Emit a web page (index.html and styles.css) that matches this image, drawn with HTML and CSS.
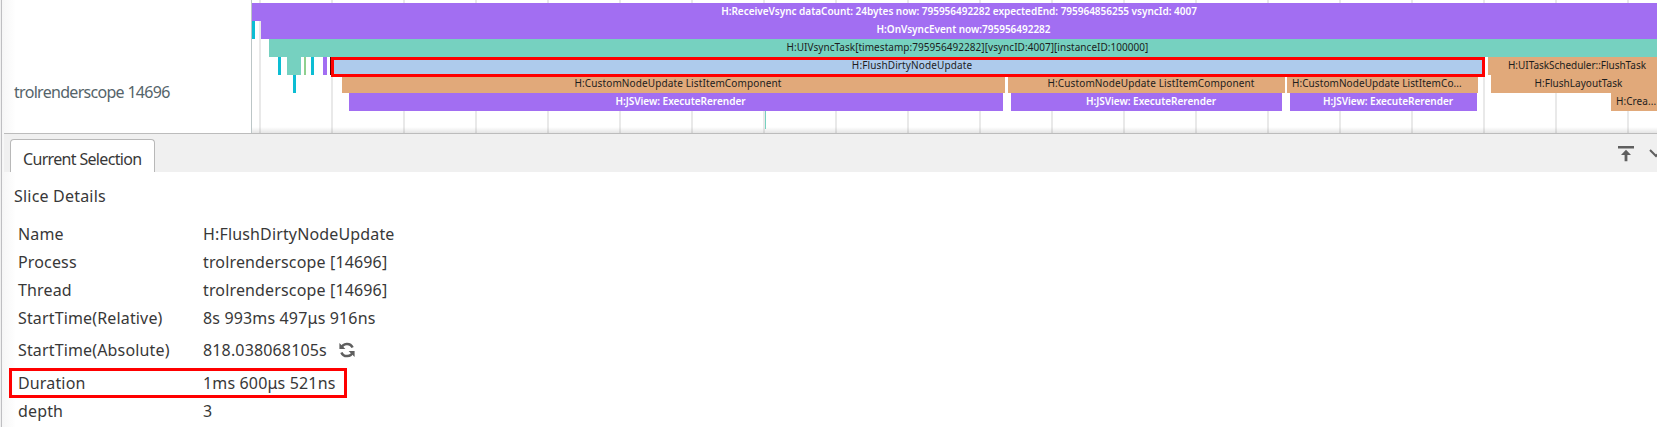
FILE: index.html
```
<!DOCTYPE html>
<html lang="en">
<head>
<meta charset="utf-8">
<title>Trace viewer</title>
<link rel="stylesheet" href="styles.css">
</head>
<body>
<div class="app">
  <section class="track">
    <div class="track-name">trolrenderscope 14696</div>
    <div class="chart">
      <div class="row">
        <div class="slice purple grow"><span class="b">H:ReceiveVsync dataCount: 24bytes now: 795956492282 expectedEnd: 795964856255 vsyncId: 4007</span></div>
      </div>
      <div class="row">
        <div class="slice cyan" style="width:3px"></div>
        <div class="slice purple grow" style="margin-left:6px"><span class="b">H:OnVsyncEvent now:795956492282</span></div>
      </div>
      <div class="row">
        <div class="slice teal grow" style="margin-left:17px"><span class="n snug">H:UIVsyncTask[timestamp:795956492282][vsyncID:4007][instanceID:100000]</span></div>
      </div>
      <div class="row">
        <div class="slice cyan" style="margin-left:26px;width:3px"></div>
        <div class="slice teal" style="margin-left:6px;width:14px"></div>
        <div class="slice green" style="margin-left:3px;width:2px"></div>
        <div class="slice cyan" style="margin-left:5px;width:3px"></div>
        <div class="slice purple" style="margin-left:9px;width:4px"></div>
        <div class="slice blue selected" style="margin-left:3px;width:1155px"><span class="n">H:FlushDirtyNodeUpdate</span></div>
        <div class="slice orange grow" style="margin-left:3px"><span class="n tight">H:UITaskScheduler::FlushTask</span></div>
      </div>
      <div class="row">
        <div class="slice cyan" style="margin-left:41px;width:3px"></div>
        <div class="slice orange" style="margin-left:46px;width:663px"><span class="n">H:CustomNodeUpdate ListItemComponent</span></div>
        <div class="slice orange" style="margin-left:3px;width:277px"><span class="n">H:CustomNodeUpdate ListItemComponent</span></div>
        <div class="slice orange cut" style="margin-left:2px;width:191px"><span class="n">H:CustomNodeUpdate ListItemCo...</span></div>
        <div class="slice orange grow" style="margin-left:13px"><span class="n snug">H:FlushLayoutTask</span></div>
      </div>
      <div class="row">
        <div class="slice purple" style="margin-left:97px;width:654px"><span class="b">H:JSView: ExecuteRerender</span></div>
        <div class="slice purple" style="margin-left:8px;width:271px"><span class="b">H:JSView: ExecuteRerender</span></div>
        <div class="slice purple" style="margin-left:8px;width:187px"><span class="b">H:JSView: ExecuteRerender</span></div>
        <div class="slice orange grow cut" style="margin-left:134px"><span class="n">H:Crea...</span></div>
      </div>
      <div class="row">
        <div class="slice teal" style="margin-left:513px;width:1px"></div>
      </div>
    </div>
  </section>
  <section class="panel">
    <header class="tabs">
      <div class="tab">Current Selection</div>
      <div class="tools">
        <svg width="16" height="16" viewBox="0 0 16 16"><path d="M0 0h16v2.6H0zM8 3.8 13 9H9.4v6.2H6.6V9H3z" fill="#5f5f5f"/></svg>
        <svg width="14" height="14" viewBox="0 0 14 14"><path d="M1 4l6 6 6-6" fill="none" stroke="#5f5f5f" stroke-width="2"/></svg>
      </div>
    </header>
    <h2 class="heading">Slice Details</h2>
    <dl class="details">
      <div class="item"><dt>Name</dt><dd>H:FlushDirtyNodeUpdate</dd></div>
      <div class="item"><dt>Process</dt><dd>trolrenderscope [14696]</dd></div>
      <div class="item"><dt>Thread</dt><dd>trolrenderscope [14696]</dd></div>
      <div class="item"><dt>StartTime(Relative)</dt><dd>8s 993ms 497μs 916ns</dd></div>
      <div class="item tall"><dt>StartTime(Absolute)</dt><dd>818.038068105s
        <svg width="16" height="16" viewBox="0 0 16 16"><g fill="none" stroke="#5f5f5f" stroke-width="2.5"><path d="M2.2 6.2A6.1 6.1 0 0 1 13.6 5.6"/><path d="M13.8 9.8A6.1 6.1 0 0 1 2.4 10.4"/></g><path d="M.4 1v6h6zM15.6 15V9h-6z" fill="#5f5f5f"/></svg></dd></div>
      <div class="item marked"><dt>Duration</dt><dd>1ms 600μs 521ns</dd></div>
      <div class="item"><dt>depth</dt><dd>3</dd></div>
    </dl>
  </section>
</div>
</body>
</html>
```
FILE: styles.css
```
* { box-sizing: border-box; }
body {
  margin: 0;
  background: #f0f0f0;
  font-family: "Noto Sans", "Open Sans", sans-serif;
  font-size: 16px;
  color: #383838;
}
.app {
  height: 427px;
  margin-left: 1px;
  border-left: 1px solid #bfbfc2;
  background: linear-gradient(90deg, #f6f6f6, #fff 14px);
  overflow: hidden;
}
.track { display: flex; height: 133px; }
.track-name {
  width: 250px;
  flex: none;
  padding: 80px 0 0 12px;
  border-right: 1px solid #bcc6c7;
  color: #55646a;
  line-height: 24px;
  letter-spacing: -0.7px;
  white-space: nowrap;
}
.chart {
  flex: 1;
  min-width: 0;
  padding-top: 3px;
  background:
    linear-gradient(transparent 127px, rgba(0,0,0,.1)),
    repeating-linear-gradient(90deg, transparent 0 7px, #e9e9e9 7px 9px, transparent 9px 72px);
}
.row { display: flex; height: 18px; }
.slice {
  flex: none;
  height: 18px;
  padding-left: 9px;
  text-align: center;
  font-size: 10px;
  line-height: 17px;
  white-space: nowrap;
}
.slice:empty { padding: 0; }
.grow { flex: 1; min-width: 0; }
.cut { padding-left: 5px; text-align: left; }
.purple { background: #a26ef2; }
.teal { background: #76d1c0; }
.cyan { background: #0cbdd3; }
.green { background: #8fd08f; }
.orange { background: #e1a97a; }
.blue { background: #aecbec; }
.n { color: #1d1d1d; letter-spacing: 0.12px; }
.cut .n { letter-spacing: 0.07px; }
.snug { letter-spacing: 0.04px; }
.tight { letter-spacing: -0.03px; }
.b { color: #fff; font-weight: 600; letter-spacing: -0.02px; }
.selected { position: relative; z-index: 1; border: 1px solid #5c0000; }
.selected .n { display: block; line-height: 15px; }
.selected::after {
  content: "";
  position: absolute;
  inset: -1px -1px -3px 0;
  border: 3px solid #f00;
}
.tabs {
  display: flex;
  justify-content: space-between;
  height: 39px;
  margin-left: 2px;
  padding: 5px 0 0 6px;
  border-top: 1px solid #bcbcbc;
  background: #f0f0f0;
}
.tab {
  width: 145px;
  border: 1px solid #b8b8b8;
  border-bottom: 0;
  border-radius: 4px 4px 0 0;
  background: #fff;
  padding-left: 12px;
  line-height: 39px;
  letter-spacing: -0.67px;
  white-space: nowrap;
}
.tools { display: flex; gap: 15px; width: 39px; padding-top: 7px; flex: none; }
.tools svg { flex: none; }
.heading {
  margin: 12px 0 0 12px;
  font-size: 16px;
  font-weight: 400;
  line-height: 24px;
  letter-spacing: 0.2px;
}
.details { margin: 12px 0 0 8px; letter-spacing: 0.15px; }
.item {
  display: flex;
  align-items: center;
  width: 338px;
  height: 28px;
  padding-left: 8px;
  line-height: 24px;
  white-space: nowrap;
}
.item dt { width: 185px; flex: none; }
.item dd { margin: 0; display: flex; align-items: center; gap: 12px; }
.tall { height: 36px; }
.marked { height: 30px; margin: 0 0 -1px -1px; padding-left: 6px; border: 3px solid #f00; }
```
